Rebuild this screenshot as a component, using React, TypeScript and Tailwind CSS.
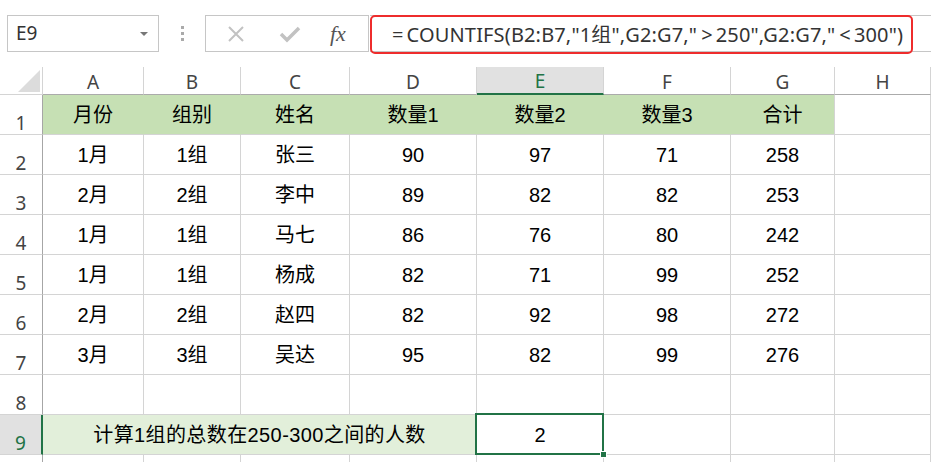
import React from "react";

const cols = ["A", "B", "C", "D", "E", "F", "G", "H"];

const rows = [
  ["月份", "组别", "姓名", "数量1", "数量2", "数量3", "合计"],
  ["1月", "1组", "张三", "90", "97", "71", "258"],
  ["2月", "2组", "李中", "89", "82", "82", "253"],
  ["1月", "1组", "马七", "86", "76", "80", "242"],
  ["1月", "1组", "杨成", "82", "71", "99", "252"],
  ["2月", "2组", "赵四", "82", "92", "98", "272"],
  ["3月", "3组", "吴达", "95", "82", "99", "276"],
];

const uiFont = "font-['Noto_Sans','Noto_Sans_CJK_SC',sans-serif]";
const cellFont = "font-['Liberation_Sans','Noto_Sans_CJK_SC',sans-serif]";

const RowHead = ({ n, active }: { n: number; active?: boolean }) => (
  <div
    className={`flex items-end justify-center border-b border-[#d4d4d4] border-r text-[19px] leading-none h-[40px] ${uiFont} ${
      active
        ? "bg-[#e1e1e1] border-r-2 border-r-[#217346] text-[#217346]"
        : "border-r-[#a6a6a6] text-[#444]"
    }`}
  >
    <span className="pb-[1px]">{n}</span>
  </div>
);

const Cell = ({
  children,
  className = "",
}: {
  children?: React.ReactNode;
  className?: string;
}) => (
  <div
    className={`flex items-center justify-center h-[40px] border-r border-b border-[#d4d4d4] text-[20px] text-black pt-[1px] ${cellFont} ${className}`}
  >
    {children}
  </div>
);

export default function App() {
  return (
    <div className="w-[931px] h-[462px] bg-white overflow-hidden">
      {/* formula bar */}
      <div className={`h-[67px] flex items-start pt-[15px] pl-[7px] ${uiFont}`}>
        <div className="w-[152px] h-[37px] border border-[#c6c6c6] flex items-center justify-between pl-[8px] pr-[10px]">
          <span className="text-[19px] text-[#333]">E9</span>
          <div className="w-0 h-0 border-l-[4px] border-r-[4px] border-t-[4px] border-l-transparent border-r-transparent border-t-[#777]"></div>
        </div>
        <div className="w-[46px] h-[37px] flex flex-col items-center justify-center gap-[3px]">
          <div className="w-[3px] h-[3px] bg-[#aaa]"></div>
          <div className="w-[3px] h-[3px] bg-[#aaa]"></div>
          <div className="w-[3px] h-[3px] bg-[#aaa]"></div>
        </div>
        <div className="w-[164px] h-[37px] border border-[#c6c6c6] flex items-center pl-[18px]">
          <svg width="20" height="20" viewBox="0 0 20 20" className="ml-[2px]">
            <path d="M3 3 L17 17 M17 3 L3 17" stroke="#c2c2c2" strokeWidth="2" />
          </svg>
          <svg width="24" height="20" viewBox="0 0 24 20" className="ml-[32px]">
            <path d="M3 10 L9 16 L21 4" stroke="#c2c2c2" strokeWidth="3.5" fill="none" />
          </svg>
          <span className="ml-[28px] text-[22px] italic text-[#555] font-['Liberation_Serif',serif] leading-none">
            fx
          </span>
        </div>
        <div className="flex-1 h-[37px] border-y border-[#c6c6c6] ml-[1px] relative">
          <div className="absolute left-0 -top-[1px] w-[543px] h-[39px] border-2 border-[#ee2c2c] rounded-[5px] flex items-center pl-[20px] text-[20px] text-[#333] whitespace-nowrap tracking-[0.15px]">
            <span className="mr-[3px]">=</span>COUNTIFS(B2:B7,"1组",G2:G7,"
            <span className="ml-[4px] mr-[3px]">&gt;</span>250",G2:G7,"
            <span className="ml-[4px] mr-[3px]">&lt;</span>300")
          </div>
        </div>
      </div>

      {/* grid */}
      <div className="grid grid-cols-[43px_101px_97px_109px_127px_127px_127px_104px_1fr]">
        {/* corner */}
        <div className="h-[28px] border-r border-b border-r-[#d4d4d4] border-b-[#d4d4d4] relative">
          <svg width="22" height="22" className="absolute right-[2px] bottom-[2px]">
            <polygon points="22,0 22,22 0,22" fill="#dcdcdc" />
          </svg>
        </div>
        {cols.map((c) =>
          c === "E" ? (
            <div
              key={c}
              className={`h-[28px] flex items-center justify-center pt-[3px] bg-[#e1e1e1] border-r border-r-[#d4d4d4] border-b-2 border-b-[#217346] text-[19px] text-[#217346] ${uiFont}`}
            >
              {c}
            </div>
          ) : (
            <div
              key={c}
              className={`h-[28px] flex items-center justify-center pt-[3px] border-r border-r-[#d4d4d4] border-b border-b-[#ababab] text-[19px] text-[#444] ${uiFont}`}
            >
              {c}
            </div>
          )
        )}

        {rows.map((r, i) => (
          <React.Fragment key={i}>
            <RowHead n={i + 1} />
            {r.map((v, j) => (
              <Cell
                key={j}
                className={
                  i === 0
                    ? `bg-[#c6e0b4] ${j < 6 ? "border-r-[#c6e0b4]" : ""}`
                    : ""
                }
              >
                {v}
              </Cell>
            ))}
            <Cell />
          </React.Fragment>
        ))}

        {/* row 8 */}
        <RowHead n={8} />
        {cols.map((c) => (
          <Cell key={c} />
        ))}

        {/* row 9 */}
        <RowHead n={9} active />
        <Cell className="col-span-4 bg-[#e2efda] border-r-[#e2efda] tracking-[0.4px]">
          计算1组的总数在250-300之间的人数
        </Cell>
        <Cell className="relative">
          <div className="absolute -left-[2px] -top-[2px] -right-[1px] -bottom-[1px] border-2 border-[#217346]"></div>
          <div className="absolute -right-[4px] -bottom-[4px] w-[7px] h-[7px] bg-[#217346] border border-white"></div>
          2
        </Cell>
        <Cell />
        <Cell />
        <Cell />

        {/* row 10 partial */}
        <div className="h-[20px] border-r border-r-[#a6a6a6]"></div>
        {cols.map((c) => (
          <div key={c} className="h-[20px] border-r border-[#d4d4d4]"></div>
        ))}
      </div>
    </div>
  );
}
